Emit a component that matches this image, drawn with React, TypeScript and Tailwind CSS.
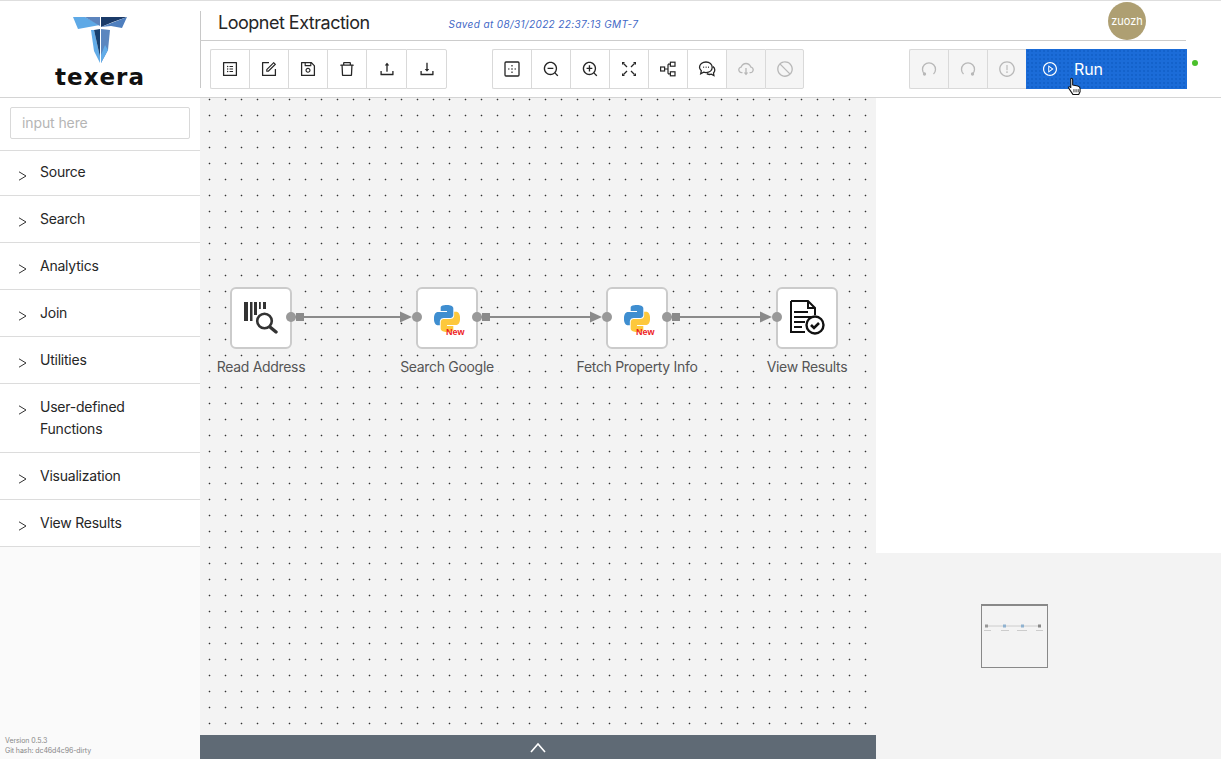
import React from "react";
import {
  AiOutlineProfile, AiOutlineForm, AiOutlineSave, AiOutlineDelete, AiOutlineUpload, AiOutlineDownload,
  AiOutlineZoomOut, AiOutlineZoomIn, AiOutlineCloudDownload, AiOutlineStop, AiOutlineExclamationCircle, AiOutlinePlayCircle,
} from "react-icons/ai";

const FONT = "font-['Inter','Noto_Sans',sans-serif]";

function Python() {
  return (
    <svg width="26" height="27" viewBox="0 0 24 24" preserveAspectRatio="none">
      <path fill="#3f8ed0" d="M14.25.18l.9.2.73.26.59.3.45.32.34.34.25.34.16.33.1.3.04.26.02.2-.01.13V8.5l-.05.63-.13.55-.21.46-.26.38-.3.31-.33.25-.35.19-.35.14-.33.1-.3.07-.26.04-.21.02H8.77l-.69.05-.59.14-.5.22-.41.27-.33.32-.27.35-.2.36-.15.37-.1.35-.07.32-.04.27-.02.21v3.06H3.17l-.21-.03-.28-.07-.32-.12-.35-.18-.36-.26-.36-.36-.35-.46-.32-.59-.28-.73-.21-.88-.14-1.05-.05-1.23.06-1.22.16-1.04.24-.87.32-.71.36-.57.4-.44.42-.33.42-.24.4-.16.36-.1.32-.05.24-.01h.16l.06.01h8.16v-.83H6.18l-.01-2.75-.02-.37.05-.34.11-.31.17-.28.25-.26.31-.23.38-.2.44-.18.51-.15.58-.12.64-.1.71-.06.77-.04.84-.02 1.27.05z" />
      <path fill="#fdc83c" d="M21.04 6.11l.28.06.32.12.35.18.36.27.36.35.35.47.32.59.28.73.21.88.14 1.04.05 1.23-.06 1.23-.16 1.04-.24.86-.32.71-.36.57-.4.45-.42.33-.42.24-.4.16-.36.09-.32.05-.24.02-.16-.01h-8.22v.82h5.84l.01 2.76.02.36-.05.34-.11.31-.17.29-.25.25-.31.24-.38.2-.44.17-.51.15-.58.13-.64.09-.71.07-.77.04-.84.01-1.27-.04-1.07-.14-.9-.2-.73-.25-.59-.3-.45-.33-.34-.34-.25-.34-.16-.33-.1-.3-.04-.25-.02-.2.01-.13v-5.34l.05-.64.13-.54.21-.46.26-.38.3-.32.33-.24.35-.2.35-.14.33-.1.3-.06.26-.04.21-.02.13-.01h5.84l.69-.05.59-.14.5-.21.41-.28.33-.32.27-.35.2-.36.15-.36.1-.35.07-.32.04-.28.02-.21V6.07h2.09l.14.01z" />
    </svg>
  );
}

function PyIcon() {
  return (
    <div className="relative w-[26px] h-[27px]">
      <Python />
      <span className="absolute left-[12px] top-[22px] text-[9px] leading-[10px] font-bold text-[#ee1c25] font-['Liberation_Sans',sans-serif]">New</span>
    </div>
  );
}

function BarcodeIcon() {
  return (
    <svg width="36" height="32" viewBox="0 0 36 32" fill="none">
      <g fill="#333">
        <rect x="1" y="0" width="4" height="19" /><rect x="7" y="0" width="2.500" height="19" /><rect x="11" y="0" width="3" height="13" /><rect x="16" y="0" width="1.800" height="7" /><rect x="20" y="0" width="3" height="7" />
      </g>
      <circle cx="21.500" cy="19" r="7.300" stroke="#333" strokeWidth="2.600" />
      <path d="M27 25l6 5" stroke="#333" strokeWidth="3.400" strokeLinecap="round" />
    </svg>
  );
}

function ResultIcon() {
  return (
    <svg width="36" height="36" viewBox="0 0 36 36" fill="none" stroke="#111" strokeWidth="2">
      <path d="M2 1h17l7 7v7M2 1v31h14" />
      <path d="M19 1v7h7" />
      <path d="M5 12h14M5 17h17M5 22h11M5 27h8" />
      <circle cx="26" cy="25" r="8.500" fill="#fff" strokeWidth="2.400" />
      <path d="M22 25l3 3 5-5" strokeWidth="2.600" />
    </svg>
  );
}

function ToolBtn({ children, disabled, last, w = 39 }: { children: React.ReactNode; disabled?: boolean; last?: boolean; w?: number }) {
  return (
    <div style={{ width: w }} className={`h-[40px] flex items-center justify-center border-[#d9d9d9] border-y border-l ${last ? "border-r" : ""} ${disabled ? "bg-[#f5f5f5] text-[#b8b8b8]" : "bg-white text-[#262626]"} first:rounded-l-[2px] last:rounded-r-[2px]`}>
      {children}
    </div>
  );
}

function Node({ left, label, children, labelW }: { left: number; label: string; children: React.ReactNode; labelW: number }) {
  return (
    <div className="absolute top-[189px] w-[62px]" style={{ left }}>
      <div className="w-[62px] h-[62px] bg-white rounded-[6px] border-[2px] border-[#cbcbcb] flex items-center justify-center">{children}</div>
      <div className="absolute top-[70px] text-center text-[14px] leading-[20px] tracking-[-0.32px] text-[#555]" style={{ left: 31 - labelW / 2, width: labelW }}>
        <span className="bg-[#f3f3f3] inline-block px-[4px]">{label}</span>
      </div>
    </div>
  );
}

const CATS: [string, number][] = [["Source", 45], ["Search", 47], ["Analytics", 47], ["Join", 47], ["Utilities", 47], ["User-defined Functions", 69], ["Visualization", 47], ["View Results", 47]];

export default function App() {
  return (
    <div className={`${FONT} w-[1221px] h-[759px] overflow-hidden bg-white flex flex-col`}>
      <header className="h-[98px] shrink-0 flex border-y border-t-[#dedede] border-b-[#d4d4d4]">
        <div className="w-[200px] shrink-0 flex flex-col items-center pt-[16px]">
          <svg width="55" height="47" viewBox="0 0 55 47">
            <polygon points="0,0 12,0 27,8 5,12" fill="#5ea9e6" />
            <polygon points="12,0 27,0 27,9" fill="#5c84bd" />
            <polygon points="28,0 54,0 40,5 28,10" fill="#1a3a68" />
            <polygon points="28,10 54,0 49,11 38,9" fill="#4f7fbe" />
            <polygon points="18,13 21,13 27,40 27,46 21,34" fill="#62ace8" />
            <polygon points="21,13 27,12 27,40" fill="#17406f" />
            <polygon points="28,12 37,13 35,33 28,46" fill="#5b86bf" />
            <polygon points="32,28 35,33 28,46 28,38" fill="#62ace8" />
          </svg>
          <div className="mt-[2px] text-[23px] leading-[22px] font-['DejaVu_Sans',sans-serif] font-bold text-[#111] tracking-[1px]">texera</div>
        </div>
        <div className="flex-1 relative">
          <div className="absolute left-0 top-[10px] h-[77px] w-px bg-[#c8c8c8]" />
          <div className="h-[40px] w-[986px] border-b border-[#cccccc] flex items-start pl-[18px] pt-[9px] relative">
            <span className="text-[18px] leading-[26px] tracking-[-0.5px] text-[#262626]">Loopnet Extraction</span>
            <span className="ml-[79px] mt-[7px] text-[10px] leading-[14px] italic text-[#3f68c6] tracking-[0.38px]">Saved at 08/31/2022 22:37:13 GMT-7</span>
            <div className="absolute left-[908px] top-[1px] w-[38px] h-[38px] rounded-full bg-[#ae9f72] text-white text-[11px] flex items-center justify-center">zuozh</div>
          </div>
          <div className="flex items-start pt-[8px] pl-[10px]">
            <div className="flex">
              <ToolBtn><AiOutlineProfile size={18} /></ToolBtn>
              <ToolBtn><AiOutlineForm size={18} /></ToolBtn>
              <ToolBtn><AiOutlineSave size={18} /></ToolBtn>
              <ToolBtn><AiOutlineDelete size={18} /></ToolBtn>
              <ToolBtn w={40}><AiOutlineUpload size={18} /></ToolBtn>
              <ToolBtn w={41} last><AiOutlineDownload size={18} /></ToolBtn>
            </div>
            <div className="flex ml-[45px]">
              <ToolBtn>
                <svg width="16" height="16" viewBox="0 0 16 16" fill="none" stroke="currentColor">
                  <rect x="1" y="1" width="14" height="14" rx="1" strokeWidth="1.300" />
                  <path d="M8 4v1.500M8 7.200v1.600M8 10.500V12M4 8h1.500M10.500 8H12" strokeWidth="1.200" />
                </svg>
              </ToolBtn>
              <ToolBtn><AiOutlineZoomOut size={18} /></ToolBtn>
              <ToolBtn><AiOutlineZoomIn size={18} /></ToolBtn>
              <ToolBtn>
                <svg width="14" height="14" viewBox="0 0 14 14" fill="currentColor" stroke="currentColor" strokeWidth="1.300">
                  <path d="M1.500 1.500L5 5M12.500 1.500L9 5M1.500 12.500L5 9M12.500 12.500L9 9" />
                  <path d="M0 3V0h3zM11 0h3v3zM0 11v3h3zM14 11v3h-3z" strokeWidth="0" />
                </svg>
              </ToolBtn>
              <ToolBtn>
                <svg width="16" height="16" viewBox="0 0 16 16" fill="none" stroke="currentColor" strokeWidth="1.200">
                  <rect x="0.600" y="6" width="4" height="4" /><rect x="10.400" y="1.200" width="4.600" height="4" /><rect x="10.400" y="10.800" width="4.600" height="4" />
                  <path d="M4.600 8H8M8 3.200V12.800M8 3.200h2.400M8 12.800h2.400" />
                </svg>
              </ToolBtn>
              <ToolBtn>
                <svg width="18" height="18" viewBox="0 0 18 18" fill="none" stroke="currentColor" strokeWidth="1.300">
                  <path d="M8 2c3.600 0 6.200 2.300 6.200 5.300S11.600 12.600 8 12.600c-.9 0-1.700-.1-2.400-.4L2.700 13.800l.6-3C2.200 9.800 1.500 8.700 1.500 7.300 1.500 4.300 4.400 2 8 2z" />
                  <path d="M15 6.500c1.100.9 1.800 2.100 1.800 3.500 0 1.100-.5 2.200-1.300 3l.4 2.500-2.600-1.300c-1.500.5-3.100.3-4.500-.6" />
                  <path d="M5.300 7.300h.8M7.700 7.300h.8M10.100 7.300h.8" strokeWidth="1.400" />
                </svg>
              </ToolBtn>
              <ToolBtn disabled><AiOutlineCloudDownload size={18} /></ToolBtn>
              <ToolBtn disabled last><AiOutlineStop size={18} /></ToolBtn>
            </div>
            <div className="flex ml-[105px]">
              <ToolBtn disabled>
                <svg width="16" height="16" viewBox="0 0 16 16" fill="none" stroke="currentColor" strokeWidth="1.300"><path d="M3.500 13A6.500 6.500 0 1 1 12.500 13" /><circle cx="3.500" cy="13" r="1" fill="currentColor" /></svg>
              </ToolBtn>
              <ToolBtn disabled>
                <svg width="16" height="16" viewBox="0 0 16 16" fill="none" stroke="currentColor" strokeWidth="1.300"><path d="M3.500 13A6.500 6.500 0 1 1 12.500 13" /><circle cx="12.500" cy="13" r="1" fill="currentColor" /></svg>
              </ToolBtn>
              <ToolBtn disabled><AiOutlineExclamationCircle size={18} /></ToolBtn>
              <div className="relative w-[161px] h-[40px] bg-[#1b6cd8] bg-[radial-gradient(circle,#0f5cc4_0.600px,transparent_0.900px)] bg-[size:4px_4px] text-white flex items-center pl-[16px]">
                <AiOutlinePlayCircle size={16} />
                <span className="ml-[16px] text-[16px] leading-[24px] tracking-[-0.1px]">Run</span>
                <svg className="absolute left-[41px] top-[28px]" width="16" height="19" viewBox="0 0 15 18">
                  <path d="M3.500 1.500c.8-.6 1.800 0 1.800 1v5l4.800 1c1.500.4 2.200 1.200 2.200 2.500v3L11 16.500H5.500L1.500 10.500c-.5-.9.700-1.700 1.500-1l.5.500V2.500z" fill="#fff" stroke="#111" strokeWidth="1" strokeLinejoin="round" />
                  <path d="M6.500 11.500v3M8.500 11.500v3M10.500 11.500v3" stroke="#111" strokeWidth="0.800" />
                </svg>
              </div>
            </div>
            <div className="ml-[5px] mt-[11px] w-[6px] h-[6px] rounded-full bg-[#4bc02c]" />
          </div>
        </div>
      </header>

      <div className="flex-1 flex min-h-0">
        <aside className="w-[200px] shrink-0 flex flex-col bg-[#fafafa] relative">
          <div className="bg-white flex flex-col">
            <div className="h-[53px] pt-[9px] px-[10px] border-b border-[#dcdcdc]">
              <div className="h-[32px] border border-[#d9d9d9] rounded-[2px] px-[11px] text-[14px] leading-[30px] tracking-[-0.1px] text-[#b5b5b5]">input here</div>
            </div>
            {CATS.map(([name, h], i) => (
              <div key={name} className="relative border-b border-[#dcdcdc] pl-[40px] pr-[50px] text-[14px] leading-[22px] tracking-[-0.23px] text-[#262626]" style={{ height: h, paddingTop: i === 0 ? 10 : 12 }}>
                <svg className="absolute left-[18px]" style={{ top: i === 0 ? 20 : 21 }} width="9" height="10" viewBox="0 0 9 10" fill="none" stroke="#333" strokeWidth="1"><path d="M1 .8L8 5l-7 4.200" /></svg>
                {name}
              </div>
            ))}
          </div>
          <div className="absolute left-[5px] bottom-[4px] text-[7px] leading-[9.500px] text-[#888] tracking-[-0.08px]">
            <div>Version 0.5.3</div>
            <div>Git hash: dc46d4c96-dirty</div>
          </div>
        </aside>

        <main className="w-[676px] shrink-0 flex flex-col">
          <div className="flex-1 relative bg-[#f3f3f3] bg-[radial-gradient(circle_at_9.500px_1.500px,#333_0.700px,transparent_1.100px)] bg-[size:16px_16px]">
            <Node left={30} label="Read Address" labelW={100}><BarcodeIcon /></Node>
            <Node left={216} label="Search Google" labelW={110}><PyIcon /></Node>
            <Node left={406} label="Fetch Property Info" labelW={140}><PyIcon /></Node>
            <Node left={576} label="View Results" labelW={100}><ResultIcon /></Node>
            <svg className="absolute left-0 top-0" width="676" height="637" viewBox="0 0 676 637" fill="none">
              {[[90, 200], [276, 390], [466, 560]].map(([a, b]) => (
                <g key={a}>
                  <path d={`M${a + 5} 219H${b + 5}`} stroke="#8a8a8a" strokeWidth="1.800" />
                  <path d={`M${b} 213.500l12 5.500-12 5.500z`} fill="#8a8a8a" />
                  <rect x={a + 6} y="215" width="8" height="8" fill="#8a8a8a" />
                  <circle cx={a + 1} cy="219" r="5" fill="#999" />
                  <circle cx={b + 17} cy="219" r="5" fill="#999" />
                </g>
              ))}
            </svg>
          </div>
          <div className="h-[24px] shrink-0 bg-[#5f6a75] flex items-center justify-center">
            <svg width="16" height="11" viewBox="0 0 16 11" fill="none" stroke="#fff" strokeWidth="1.600"><path d="M1 10l7-8 7 8" /></svg>
          </div>
        </main>

        <section className="flex-1 flex flex-col">
          <div className="h-[455px] bg-white" />
          <div className="flex-1 bg-[#f3f3f3] pt-[51px] pl-[105px]">
            <div className="w-[67px] h-[64px] border border-[#888] border-t-2 relative">
              <svg className="absolute left-0 top-[17px]" width="65" height="12" viewBox="0 0 65 12" fill="none">
                <path d="M5 3H57" stroke="#ccc" />
                <rect x="3" y="1.500" width="3" height="3" fill="#999" /><rect x="21" y="1.500" width="3" height="3" fill="#8fb2d0" /><rect x="39" y="1.500" width="3" height="3" fill="#8fb2d0" /><rect x="56" y="1.500" width="3" height="3" fill="#888" />
                <path d="M2 7.500h7M19 7.500h8M35 7.500h10M54 7.500h7" stroke="#ccc" />
              </svg>
            </div>
          </div>
        </section>
      </div>
    </div>
  );
}
